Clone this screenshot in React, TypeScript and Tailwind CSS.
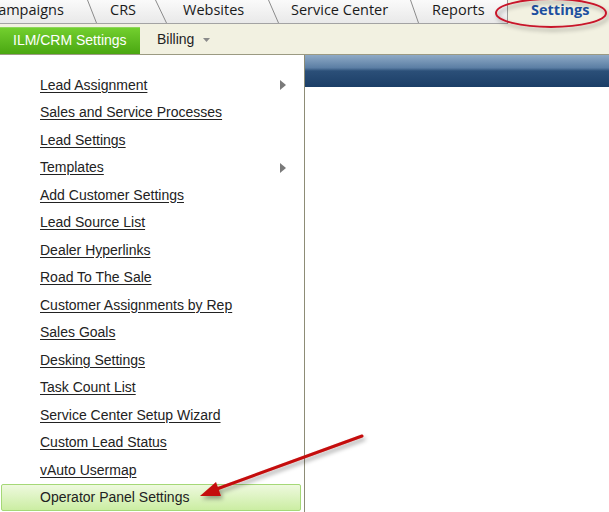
import React from "react";

const items = [
  { t: "Lead Assignment", sub: true },
  { t: "Sales and Service Processes" },
  { t: "Lead Settings" },
  { t: "Templates", sub: true },
  { t: "Add Customer Settings" },
  { t: "Lead Source List" },
  { t: "Dealer Hyperlinks" },
  { t: "Road To The Sale" },
  { t: "Customer Assignments by Rep" },
  { t: "Sales Goals" },
  { t: "Desking Settings" },
  { t: "Task Count List" },
  { t: "Service Center Setup Wizard" },
  { t: "Custom Lead Status" },
  { t: "vAuto Usermap" },
];

function Sep({ w }: { w: number }) {
  return (
    <svg width={w} height={23} className="shrink-0 block">
      <line x1={0.5} y1={0} x2={w - 0.5} y2={23} stroke="#8a8a8a" strokeWidth={1} />
    </svg>
  );
}

function Tab({ w, pl, children }: { w: number; pl: number; children: React.ReactNode }) {
  return (
    <div
      className="h-[23px] shrink-0 flex items-center pb-[4px] text-[14.5px] text-[#1a1a1a] whitespace-nowrap overflow-hidden"
      style={{ width: w, paddingLeft: pl }}
    >
      {children}
    </div>
  );
}

export default function App() {
  return (
    <div
      className="relative w-[609px] h-[512px] overflow-hidden bg-white"
      style={{ fontFamily: '"Liberation Sans", Arial, sans-serif' }}
    >
      {/* Tab bar */}
      <div className="flex h-[24px]" style={{ fontFamily: '"Open Sans", "Noto Sans", sans-serif' }}>
        <div className="flex h-[24px] border-b border-[#a3a3a3] bg-gradient-to-b from-[#fafafa] to-[#e9e9e9]">
          <Tab w={87} pl={0}>
            <span className="-ml-[11px]">Campaigns</span>
          </Tab>
          <Sep w={10} />
          <Tab w={58} pl={13}>CRS</Tab>
          <Sep w={12} />
          <Tab w={101} pl={16}>Websites</Tab>
          <Sep w={11} />
          <Tab w={131} pl={12}>Service Center</Tab>
          <Sep w={9} />
          <Tab w={88} pl={13}>Reports</Tab>
        </div>
        <div className="flex-1 h-[24px] bg-[#f2f1e1] border-l border-[#9a9a9a] flex items-center pb-[5px] pl-[23px] text-[14.5px] font-bold text-[#1c4fa0]">
          Settings
        </div>
      </div>

      {/* Sub nav */}
      <div className="h-[31px] bg-[#f2f1e1] border-b border-[#9b9a82] flex items-center">
        <div className="h-[27px] w-[140px] mt-[2px] flex items-center pl-[13px] text-[14px] text-white bg-gradient-to-b from-[#72cf2e] to-[#4aa710] border-t border-[#8ed65a]">
          ILM/CRM Settings
        </div>
        <div className="flex items-center ml-[17px] text-[14px] text-[#1f1f1f]">
          Billing
          <svg width="7" height="4" className="ml-[9px] mt-[2px]">
            <polygon points="0,0 7,0 3.5,4" fill="#8a8a8a" />
          </svg>
        </div>
      </div>

      {/* Body */}
      <div className="flex">
        <div className="w-[305px] shrink-0 border-r border-[#8d8c76] pt-[16px] h-[460px]">
          {items.map((it) => (
            <div key={it.t} className="h-[27.5px] flex items-center pt-[1px] pl-[40px] pr-[15px] text-[14px] text-[#222]">
              <span className="underline underline-offset-[2px] flex-1">{it.t}</span>
              {it.sub && (
                <svg width="6" height="10" className="mr-[3px]">
                  <polygon points="0,0 6,5 0,10" fill="#7a7a7a" />
                </svg>
              )}
            </div>
          ))}
          <div className="h-[27.5px] ml-[1px] mr-[3px] flex items-center pl-[38px] text-[14px] text-[#222] rounded-[2px] border border-[#a5d877] bg-gradient-to-b from-[#eef9de] to-[#cbeda2]">
            Operator Panel Settings
          </div>
        </div>
        <div className="flex-1">
          <div
            className="h-[32px]"
            style={{
              background:
                "linear-gradient(to bottom, #8faac6 0%, #5b7ea4 40%, #2b4f78 50%, #1b3e67 100%)",
            }}
          />
        </div>
      </div>

      {/* Annotations */}
      <svg className="absolute left-0 top-0 pointer-events-none" width={609} height={512}>
        <defs>
          <filter id="sh" x="-20%" y="-50%" width="140%" height="200%">
            <feDropShadow dx="2" dy="3" stdDeviation="2" floodColor="#000" floodOpacity="0.35" />
          </filter>
        </defs>
        <ellipse cx={551} cy={13} rx={55} ry={14} fill="none" stroke="#c8172c" strokeWidth={2} filter="url(#sh)" />
        <g filter="url(#sh)">
          <line x1={362} y1={436} x2={214} y2={490} stroke="#c40a0a" strokeWidth={3} strokeLinecap="round" />
          <polygon points="200,496 221,496 216,482" fill="#c40a0a" />
        </g>
      </svg>
    </div>
  );
}
